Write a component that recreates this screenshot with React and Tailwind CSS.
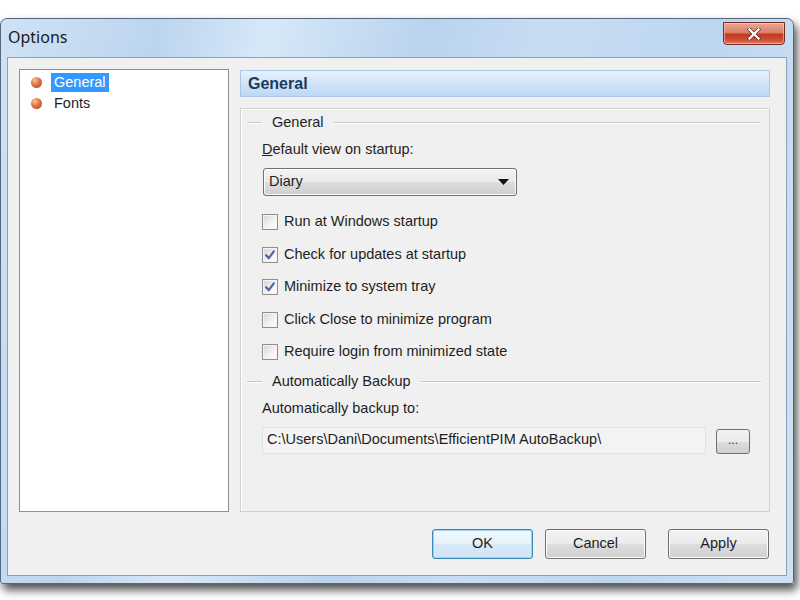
import React from "react";

const font = { fontFamily: '"Liberation Sans", Arial, sans-serif' };

function Check({ checked }) {
  return (
    <div className="w-[16px] h-[16px] border border-[#8e8f8f] bg-[linear-gradient(135deg,#d6d6d6_0%,#f4f4f4_60%,#ffffff_100%)] flex items-center justify-center shrink-0 shadow-[inset_0_0_0_1px_#f4f4f4]">
      {checked && (
        <svg width="12" height="12" viewBox="0 0 12 12">
          <path d="M2.2 6.2 L4.8 9.2 L9.8 2.4" fill="none" stroke="#52649c" strokeWidth="2.2" strokeLinecap="round" strokeLinejoin="round" />
        </svg>
      )}
    </div>
  );
}

function CheckRow({ checked, label }) {
  return (
    <div className="h-[32.5px] flex items-center">
      <Check checked={checked} />
      <span className="ml-[6px] text-[14.5px] text-[#1e1e1e]">{label}</span>
    </div>
  );
}

function Legend({ label, mt }) {
  return (
    <div className={`h-[18px] flex items-center pl-[6px] pr-[8px] ${mt}`}>
      <div className="w-[15px] h-[2px] border-t border-[#c6c6c6] border-b border-b-white" />
      <span className="ml-[10px] mr-[10px] text-[14.5px] text-[#1e1e1e]">{label}</span>
      <div className="flex-1 h-[2px] border-t border-[#c6c6c6] border-b border-b-white" />
    </div>
  );
}

function Bullet() {
  return (
    <div className="w-[11px] h-[11px] rounded-full bg-[radial-gradient(circle_at_35%_30%,#f7c2a0_0%,#e0713f_45%,#b0421c_100%)] shrink-0" />
  );
}

function Btn({ children, focus }) {
  return (
    <div
      className={`w-[101px] h-[30px] rounded-[3px] flex items-center justify-center text-[14.5px] text-[#1e1e1e] ${
        focus
          ? "border border-[#3c86b8] bg-[linear-gradient(#f1f8fd_0%,#e6f2fb_50%,#d8eaf8_51%,#cfe4f5_100%)] shadow-[inset_0_0_0_1px_#9fd3ef]"
          : "border border-[#707070] bg-[linear-gradient(#f2f2f2_0%,#ebebeb_50%,#dddddd_51%,#cfcfcf_100%)] shadow-[inset_0_0_0_1px_#fcfcfc]"
      }`}
    >
      {children}
    </div>
  );
}

export default function App() {
  return (
    <div className="w-[800px] h-[600px] bg-white overflow-hidden pt-[18px]" style={font}>
      <div className="w-[794px] h-[566px] rounded-t-[7px] rounded-b-[3px] border border-[#53677f] bg-[linear-gradient(100deg,#cfe2f5_0%,#bcd5ef_18%,#d7e8f8_30%,#bad3ee_48%,#c8ddf3_62%,#bdd6f0_80%,#cfe2f5_100%)] shadow-[3px_6px_10px_rgba(0,0,0,0.7)] flex flex-col">
        <div className="h-[38px] flex items-start pl-[7px] pr-[7px]">
          <span className="mt-[6px] text-[16px] text-[#1b1b1b]" style={{ fontFamily: '"Noto Sans", "Open Sans", sans-serif' }}>
            Options
          </span>
          <div className="ml-auto mt-[3px] mr-[1px] w-[62px] h-[23px] rounded-b-[4px] border border-[#7a2a1d] bg-[linear-gradient(#e9a897_0%,#dc8068_45%,#c2391f_55%,#d0553c_85%,#e08a6f_100%)] flex items-center justify-center shadow-[inset_0_0_0_1px_rgba(255,220,210,0.5)]">
            <svg width="14" height="12" viewBox="0 0 14 12">
              <path d="M2.5 1.5 L11.5 10.5 M11.5 1.5 L2.5 10.5" stroke="#5a1c10" strokeWidth="3.6" strokeLinecap="square" />
              <path d="M2.5 1.5 L11.5 10.5 M11.5 1.5 L2.5 10.5" stroke="#ffffff" strokeWidth="2.4" strokeLinecap="square" />
            </svg>
          </div>
        </div>
        <div className="ml-[6px] mr-[6px] mb-[7px] flex-1 bg-[#f0f0f0] border border-[#8ea0b6] flex flex-col pl-[11px] pt-[11px] pr-[16px]">
          <div className="flex h-[443px]">
            <div className="w-[210px] bg-white border border-[#8c8f94] pt-[2px] pl-[11px]">
              <div className="h-[21px] flex items-center">
                <Bullet />
                <span className="ml-[9px] px-[3px] h-[19px] flex items-center bg-[#3399ff] text-white text-[14.5px]">General</span>
              </div>
              <div className="h-[21px] flex items-center">
                <Bullet />
                <span className="ml-[12px] text-[14.5px] text-[#1e1e1e]">Fonts</span>
              </div>
            </div>
            <div className="ml-[11px] flex-1 flex flex-col">
              <div className="mt-[1px] h-[27px] border border-[#aac8e8] bg-[linear-gradient(#e8f1fb_0%,#d2e4f7_50%,#bcd8f6_100%)] flex items-center pl-[7px]">
                <span className="text-[16px] font-bold text-[#1c3a60]">General</span>
              </div>
              <div className="mt-[11px] flex-1 border border-[#d0d0d0] shadow-[inset_1px_1px_0_#ffffff] flex flex-col">
                <Legend label="General" mt="mt-[5px]" />
                <div className="pl-[21px] flex flex-col">
                  <div className="mt-[9px] h-[18px] flex items-center text-[14.5px] text-[#1e1e1e]">
                    <span><span className="underline">D</span>efault view on startup:</span>
                  </div>
                  <div className="mt-[9px] ml-[1px] w-[254px] h-[28px] rounded-[3px] border border-[#707070] bg-[linear-gradient(#f2f2f2_0%,#ebebeb_50%,#dddddd_51%,#cfcfcf_100%)] shadow-[inset_0_0_0_1px_#fbfbfb] flex items-center pl-[5px] pr-[7px]">
                    <span className="text-[14.5px] text-[#1e1e1e]">Diary</span>
                    <svg className="ml-auto" width="11" height="6" viewBox="0 0 11 6">
                      <path d="M0 0 H11 L5.5 6 Z" fill="#111" />
                    </svg>
                  </div>
                  <div className="mt-[10px] flex flex-col">
                    <CheckRow checked={false} label="Run at Windows startup" />
                    <CheckRow checked={true} label="Check for updates at startup" />
                    <CheckRow checked={true} label="Minimize to system tray" />
                    <CheckRow checked={false} label="Click Close to minimize program" />
                    <CheckRow checked={false} label="Require login from minimized state" />
                  </div>
                </div>
                <Legend label="Automatically Backup" mt="mt-[4px]" />
                <div className="pl-[21px] flex flex-col">
                  <div className="mt-[9px] h-[18px] flex items-center text-[14.5px] text-[#1e1e1e]">
                    Automatically backup to:
                  </div>
                  <div className="mt-[9px] flex items-center">
                    <div className="w-[444px] h-[27px] border border-[#e0e0e0] bg-[#f3f3f3] flex items-center pl-[4px] text-[14.5px] text-[#1e1e1e]">
                      C:\Users\Dani\Documents\EfficientPIM AutoBackup\
                    </div>
                    <div className="ml-[10px] mt-[2px] w-[34px] h-[25px] rounded-[3px] border border-[#707070] bg-[linear-gradient(#f2f2f2_0%,#ebebeb_50%,#dddddd_51%,#cfcfcf_100%)] flex items-center justify-center text-[12px] text-[#333] pb-[2px]">
                      ...
                    </div>
                  </div>
                </div>
              </div>
            </div>
          </div>
          <div className="mt-[17px] flex justify-end mr-[1px]">
            <Btn focus>OK</Btn>
            <div className="ml-[12px]"><Btn>Cancel</Btn></div>
            <div className="ml-[22px]"><Btn>Apply</Btn></div>
          </div>
        </div>
      </div>
    </div>
  );
}
